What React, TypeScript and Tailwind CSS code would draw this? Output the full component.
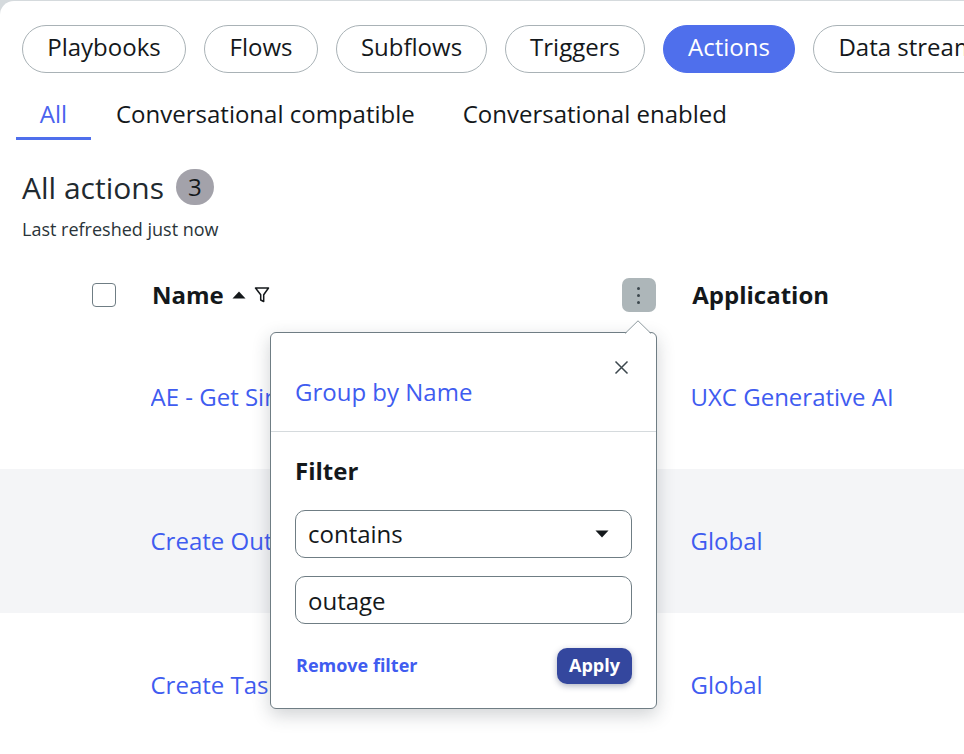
import React from "react";

const pills = [
  { label: "Playbooks", w: "w-[164px]" },
  { label: "Flows", w: "w-[114px]" },
  { label: "Subflows", w: "w-[151px]" },
  { label: "Triggers", w: "w-[140px]" },
  { label: "Actions", w: "w-[132px]", active: true },
  { label: "Data streams", w: "w-[200px]" },
];

const rows = [
  { name: "AE - Get Sim", app: "UXC Generative AI", bg: "bg-white" },
  { name: "Create Outage", app: "Global", bg: "bg-[#f4f5f7]" },
  { name: "Create Task", app: "Global", bg: "bg-white" },
];

export default function App() {
  return (
    <div className="relative w-[964px] h-[754px] overflow-hidden bg-[#d5dadd] pt-px font-['Open_Sans',sans-serif] text-[#14181b]">
      <div className="h-[753px] bg-white rounded-tl-[14px] overflow-hidden">
        <div className="flex gap-[18px] pl-[22px] pt-[24px] whitespace-nowrap">
          {pills.map((p) => (
            <div
              key={p.label}
              className={`${p.w} shrink-0 h-[48px] rounded-[24px] flex items-center justify-center pb-[5px] text-[24px] border ${
                p.active ? "bg-[#4f6fec] border-[#4f6fec] text-white" : "bg-white border-[#a9b2b6] text-[#14181b]"
              }`}
            >
              {p.label}
            </div>
          ))}
        </div>
        <div className="flex pl-[16px] mt-[19px] text-[24px] h-[48px] whitespace-nowrap">
          <div className="w-[75px] h-[48px] border-b-[3px] border-[#4f6fec] text-[#4a63ee] flex justify-center pt-[6px] leading-[32px]">All</div>
          <div className="ml-[25px] pt-[6px] leading-[32px]">Conversational compatible</div>
          <div className="ml-[48px] pt-[6px] leading-[32px]">Conversational enabled</div>
        </div>
        <div className="flex items-center pl-[22px] mt-[28px] h-[38px]">
          <span className="text-[30px] leading-[38px] pt-[2px] text-[#1f2a30]">All actions</span>
          <span className="ml-[12px] w-[38px] h-[36px] rounded-full bg-[#a3a2aa] flex items-center justify-center text-[24px] text-[#14181b]">3</span>
        </div>
        <div className="pl-[22px] mt-[11px] text-[18px] leading-[24px] text-[#2a3439]">Last refreshed just now</div>

        <div className="flex items-center mt-[37px] h-[34px] pl-[92px]">
          <div className="w-[24px] h-[24px] rounded-[4px] border border-[#6f7d84] bg-white" />
          <span className="ml-[36px] text-[24px] font-bold leading-[34px] text-[#14181b]">Name</span>
          <svg className="ml-[8px]" width="14" height="8" viewBox="0 0 14 8"><path d="M7 0.5 L13.5 7.5 L0.5 7.5 Z" fill="#14181b" /></svg>
          <svg className="ml-[8px]" width="16" height="18" viewBox="0 0 16 18" fill="none"><path d="M1.5 2 H14.5 L9.7 8.8 V15.5 L6.7 14 V8.8 Z" stroke="#14181b" strokeWidth="1.5" strokeLinejoin="round" /></svg>
          <div className="ml-[352px] w-[34px] h-[34px] rounded-[7px] bg-[#adb6b9] flex flex-col items-center justify-center gap-[4px]">
            <span className="w-[3px] h-[3px] rounded-full bg-[#3c474d]" />
            <span className="w-[3px] h-[3px] rounded-full bg-[#3c474d]" />
            <span className="w-[3px] h-[3px] rounded-full bg-[#3c474d]" />
          </div>
          <span className="ml-[36.5px] text-[24px] font-bold leading-[34px] text-[#14181b]">Application</span>
        </div>

        <div className="mt-[13px] text-[24px] text-[#3f5cf0] whitespace-nowrap">
          {rows.map((r) => (
            <div key={r.name} className={`flex items-center h-[144px] ${r.bg}`}>
              <span className="ml-[150.5px] w-[540px] overflow-hidden">{r.name}</span>
              <span>{r.app}</span>
            </div>
          ))}
        </div>
      </div>

      <div className="absolute left-[270px] top-[332px] w-[387px] h-[377px] bg-white border border-[#6f7d84] rounded-[6px] shadow-[0_6px_18px_rgba(40,50,60,0.22)]">
        <svg className="absolute right-[5px] top-[-13px]" width="26" height="14" viewBox="0 0 26 14" fill="none">
          <path d="M0 14 L13 1 L26 14 Z" fill="#fff" />
          <path d="M0 13.5 L13 0.8 L26 13.5" stroke="#8d999e" strokeWidth="1" />
        </svg>
        <svg className="absolute right-[27px] top-[27px]" width="15" height="15" viewBox="0 0 15 15" fill="none"><path d="M1.5 1.5 L13.5 13.5 M13.5 1.5 L1.5 13.5" stroke="#3c474d" strokeWidth="1.5" /></svg>
        <div className="pl-[24px] pt-[41px] h-[99px] text-[24px] leading-[36px] text-[#3f5cf0] border-b border-[#d5dadd]">Group by Name</div>
        <div className="px-[24px]">
          <div className="mt-[22px] text-[24px] font-bold leading-[34px] text-[#14181b]">Filter</div>
          <div className="mt-[22px] h-[48px] rounded-[10px] border border-[#6f7d84] pl-[12px] pr-[22px] flex items-center justify-between text-[24px]">
            <span>contains</span>
            <svg width="14" height="8" viewBox="0 0 14 8"><path d="M0.5 0.5 L13.5 0.5 L7 7.5 Z" fill="#14181b" /></svg>
          </div>
          <div className="mt-[18px] h-[48px] rounded-[10px] border border-[#6f7d84] pl-[12px] pt-[2px] flex items-center text-[24px]">outage</div>
          <div className="mt-[24px] flex items-center justify-between">
            <span className="pl-px pb-[2px] text-[18px] font-bold text-[#3f5cf0]">Remove filter</span>
            <span className="w-[75px] h-[36px] rounded-[10px] bg-[#34479e] text-white text-[18px] font-bold flex items-center justify-center pb-[2px] shadow-[0_2px_6px_rgba(30,40,80,0.35)]">Apply</span>
          </div>
        </div>
      </div>
    </div>
  );
}
